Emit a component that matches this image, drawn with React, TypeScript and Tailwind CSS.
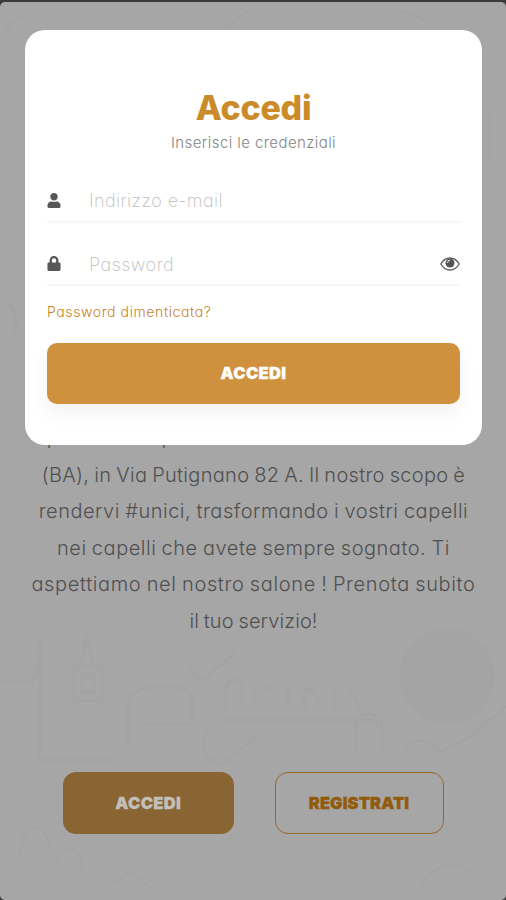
import { FaLock, FaUser } from "react-icons/fa";

const introLines = [
  { text: "parrucchieri professionisti a Castellana Grotte", className: "tracking-[-0.28px] relative -top-[2px]" },
  { text: "(BA), in Via Putignano 82 A. Il nostro scopo è", className: "tracking-[0.3px] [word-spacing:-1px]" },
  { text: "rendervi #unici, trasformando i vostri capelli", className: "tracking-[0.5px] [word-spacing:-0.7px]" },
  { text: "nei capelli che avete sempre sognato. Ti", className: "tracking-[0.52px] [word-spacing:-0.9px]" },
  { text: "aspettiamo nel nostro salone ! Prenota subito", className: "tracking-[0.64px] [word-spacing:-0.9px]" },
  { text: "il tuo servizio!", className: "tracking-[0.1px] [word-spacing:-0.9px]" },
];

function EyeIcon() {
  return (
    <svg width="20" height="14" viewBox="0 0 20 14" fill="none" aria-hidden="true">
      <path d="M.8 7C3 3.1 6.2 1 10 1s7 2.1 9.2 6C17 10.9 13.800 13 10 13S3 10.900.8 7Z" stroke="#606060" strokeWidth="1.3" />
      <circle cx="10" cy="6" r="4.500" fill="#555" />
      <path d="M7.600 6A2.600 2.600 0 0 1 10 3.300" stroke="#ddd" strokeWidth="1.1" />
    </svg>
  );
}

function Doodles() {
  return (
    <svg
      className="absolute inset-0"
      width="506"
      height="900"
      viewBox="0 0 506 900"
      fill="none"
      stroke="#9f9f9f"
      strokeWidth="2.5"
      opacity="0.35"
      aria-hidden="true"
    >
      <path d="M40 632v126h78M222 718h150l6 4M190 662c0 16 14 18 22 8l24-20M0 679h32c6-8 8-18 6-30" />
      <path d="M74 664h28v35H74zM80 664l7-31 7 31M82 673h12v17H82z" />
      <path d="M128 748v-50c8-16 52-18 64-6v30h-50M208 728c-10 20-4 30 14 34l38-30" />
      <circle cx="447" cy="674" r="46" fill="#a3a3a3" strokeWidth="3" strokeDasharray="5 3" />
      <path d="M420 660c12-22 48-24 56 0M416 682c20-18 48-12 58 6M430 706c12-14 30-12 42-2" />
      <path d="M226 710v-22c0-16 16-14 16 0v16m12-22v24m10-20h14m10 20v-22m18 22c-10-24 12-26 12 0m16-20v22m14-24 12 22" />
      <path d="M356 752v-30c0-14 26-14 26 0v30M404 750c8-18 30-12 34 0l34-16 34-30" />
      <path d="M20 850c4-36 28-30 30 0M56 860c10-24 26-16 26 8M110 882l22-12 20 18M420 886c8-24 40-30 54-12" />
      <path d="M4 35c4-12 10-18 22-20M230 23l20-16M400 8l28 12M490 110v52M8 300c8 10 12 22 4 34" />
    </svg>
  );
}

function IntroPage() {
  return (
    <div className="relative w-full h-full">
      <Doodles />
      <div className="relative flex flex-col h-full pt-[418.5px]">
        <div className="pl-px text-center text-[20px] font-light leading-[36.4px] text-[#505050] whitespace-nowrap">
          {introLines.map((line) => (
            <p key={line.text} className={`${line.className} flex justify-center`}>
              {line.text}
            </p>
          ))}
        </div>
        <div className="flex gap-[41px] pl-[63px] mt-[133.5px]">
          <button className="w-[170.500px] h-[62px] rounded-[13px] bg-[#8a6534] text-[#c3bfba] text-[16.5px] font-black tracking-[0.35px] [-webkit-text-stroke:0.3px]">
            ACCEDI
          </button>
          <button className="w-[169px] h-[62px] rounded-[13px] border-[1.500px] border-[#96672b] text-[#925b0b] text-[16.5px] font-black tracking-[0.1px] [-webkit-text-stroke:0.3px]">
            REGISTRATI
          </button>
        </div>
      </div>
    </div>
  );
}

function LoginCard() {
  return (
    <div className="absolute left-[25px] top-[30px] w-[457px] h-[415px] rounded-[20px] bg-white px-[22px] flex flex-col">
      <h1 className="mt-[57px] text-center text-[34px] leading-[42px] font-extrabold text-[#cb8b2a] tracking-[-0.3px]">
        Accedi
      </h1>
      <p className="text-center mt-[3px] text-[15px] leading-[22px] font-light text-[#858585] tracking-[0.42px]">
        Inserisci le credenziali
      </p>
      <div className="mt-[27px] h-[42px] pb-[2px] flex items-center border-b-2 border-[#f7f7f7]">
        <FaUser className="w-[14px] h-[15px] text-[#575757]" />
        <span className="ml-[28px] text-[18px] font-extralight text-[#bdbdbd] tracking-[0.4px]">Indirizzo e-mail</span>
      </div>
      <div className="mt-[21px] h-[42px] flex items-center border-b-2 border-[#f7f7f7]">
        <FaLock className="w-[14px] h-[16px] pb-px text-[#575757]" />
        <span className="ml-[28px] flex-1 text-[18px] font-extralight text-[#bdbdbd] tracking-[0.5px]">Password</span>
        <EyeIcon />
      </div>
      <a className="mt-[15px] text-[14px] leading-[22px] font-light text-[#c97f2b] tracking-[0.6px]">Password dimenticata?</a>
      <button className="mt-[20px] h-[61px] shrink-0 rounded-[10px] bg-[#cf913e] text-white text-[16.5px] font-black tracking-[0.35px] [-webkit-text-stroke:0.3px] shadow-[0_10px_20px_rgba(0,0,0,0.05)]">
        ACCEDI
      </button>
    </div>
  );
}

export default function App() {
  return (
    <div className="relative w-[506px] h-[900px] pt-[2px] overflow-hidden bg-[#3a3a3a] font-['Inter','Liberation_Sans',sans-serif] [font-feature-settings:'cv11']">
      <div className="w-full h-[898px] rounded-[5px] overflow-hidden bg-[#a6a6a6]">
        <IntroPage />
      </div>
      <LoginCard />
    </div>
  );
}
